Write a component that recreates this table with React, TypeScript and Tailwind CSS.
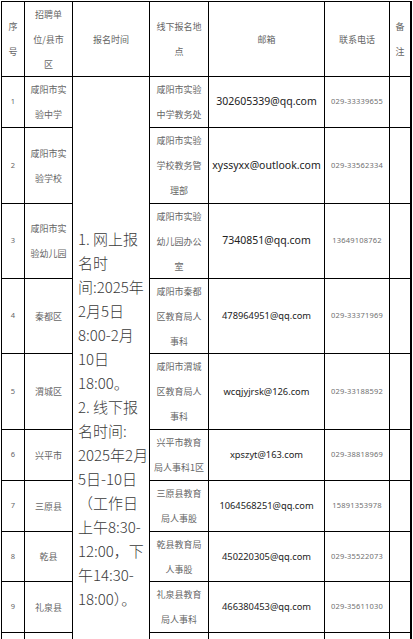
import React from "react";

type Row = {
  n: string;
  unit: string[];
  place: string[];
  email: string;
  phone: string;
  small?: boolean;
};

const rows: Row[] = [
  { n: "1", unit: ["咸阳市实", "验中学"], place: ["咸阳市实验", "中学教务处"], email: "302605339@qq.com", phone: "029-33339655" },
  { n: "2", unit: ["咸阳市实", "验学校"], place: ["咸阳市实验", "学校教务管", "理部"], email: "xyssyxx@outlook.com", phone: "029-33562334" },
  { n: "3", unit: ["咸阳市实", "验幼儿园"], place: ["咸阳市实验", "幼儿园办公", "室"], email: "7340851@qq.com", phone: "13649108762" },
  { n: "4", unit: ["秦都区"], place: ["咸阳市秦都", "区教育局人", "事科"], email: "478964951@qq.com", phone: "029-33371969", small: true },
  { n: "5", unit: ["渭城区"], place: ["咸阳市渭城", "区教育局人", "事科"], email: "wcqjyjrsk@126.com", phone: "029-33188592", small: true },
  { n: "6", unit: ["兴平市"], place: ["兴平市教育", "局人事科1区"], email: "xpszyt@163.com", phone: "029-38818969", small: true },
  { n: "7", unit: ["三原县"], place: ["三原县教育", "局人事股"], email: "1064568251@qq.com", phone: "15891353978", small: true },
  { n: "8", unit: ["乾县"], place: ["乾县教育局", "人事股"], email: "450220305@qq.com", phone: "029-35522073", small: true },
  { n: "9", unit: ["礼泉县"], place: ["礼泉县教育", "局人事科"], email: "466380453@qq.com", phone: "029-35611030", small: true },
];

const bigLines = [
  "1. 网上报",
  "名时",
  "间:2025年",
  "2月5日",
  "8:00-2月",
  "10日",
  "18:00。",
  "2. 线下报",
  "名时间:",
  "2025年2月",
  "5日-10日",
  "（工作日",
  "上午8:30-",
  "12:00，下",
  "午14:30-",
  "18:00）。",
];

function Lines({ lines }: { lines: string[] }) {
  return (
    <div className="flex flex-col items-center">
      {lines.map((l, i) => (
        <span key={i} className="whitespace-nowrap leading-[25px]">
          {l}
        </span>
      ))}
    </div>
  );
}

const cell = "bg-white flex items-center justify-center text-center overflow-hidden";
const cjk = "font-['Noto_Sans_CJK_SC',sans-serif] text-[9px] text-[#666]";

export default function App() {
  return (
    <div className="h-[639px] w-[413px] overflow-hidden bg-white pl-px pt-px">
      <div className="grid w-[411px] grid-cols-[22px_47px_76px_58px_115px_64px_20px] grid-rows-[74px_50px_75px_74px_74px_75px_50px_50px_49px_50px_50px] gap-px bg-black p-px">
        {/* header */}
        <div className={`${cell} ${cjk}`}>
          <Lines lines={["序", "号"]} />
        </div>
        <div className={`${cell} ${cjk}`}>
          <Lines lines={["招聘单", "位/县市", "区"]} />
        </div>
        <div className={`${cell} ${cjk}`}>
          <Lines lines={["报名时间"]} />
        </div>
        <div className={`${cell} ${cjk}`}>
          <Lines lines={["线下报名地", "点"]} />
        </div>
        <div className={`${cell} ${cjk}`}>
          <Lines lines={["邮箱"]} />
        </div>
        <div className={`${cell} ${cjk}`}>
          <Lines lines={["联系电话"]} />
        </div>
        <div className={`${cell} ${cjk}`}>
          <Lines lines={["备", "注"]} />
        </div>

        {rows.map((r, i) => (
          <React.Fragment key={r.n}>
            <div className={`${cell} font-['Noto_Sans',sans-serif] text-[7.5px] text-[#666]`}>{r.n}</div>
            <div className={`${cell} ${cjk}`}>
              <Lines lines={r.unit} />
            </div>
            {i === 0 && (
              <div className="row-span-10 bg-white pl-[5px] pt-[150px] font-['Noto_Sans_CJK_SC',sans-serif] text-[15px] font-light text-[#3a3a3a]">
                {bigLines.map((l, j) => (
                  <div key={j} className="whitespace-nowrap leading-[24px]">
                    {l}
                  </div>
                ))}
              </div>
            )}
            <div className={`${cell} ${cjk}`}>
              <Lines lines={r.place} />
            </div>
            <div
              className={`${cell} font-['Noto_Sans',sans-serif] text-[#222] ${r.small ? "text-[9.3px]" : "text-[10.5px]"}`}
            >
              {r.email}
            </div>
            <div className={`${cell} font-['Noto_Sans',sans-serif] text-[7.5px] text-[#707070] tracking-[0.2px]`}>
              {r.phone}
            </div>
            <div className={cell}></div>
          </React.Fragment>
        ))}
        {/* partially visible next row */}
        <div className={cell}></div>
        <div className={cell}></div>
        <div className={cell}></div>
        <div className={cell}></div>
        <div className={cell}></div>
        <div className={cell}></div>
      </div>
    </div>
  );
}
